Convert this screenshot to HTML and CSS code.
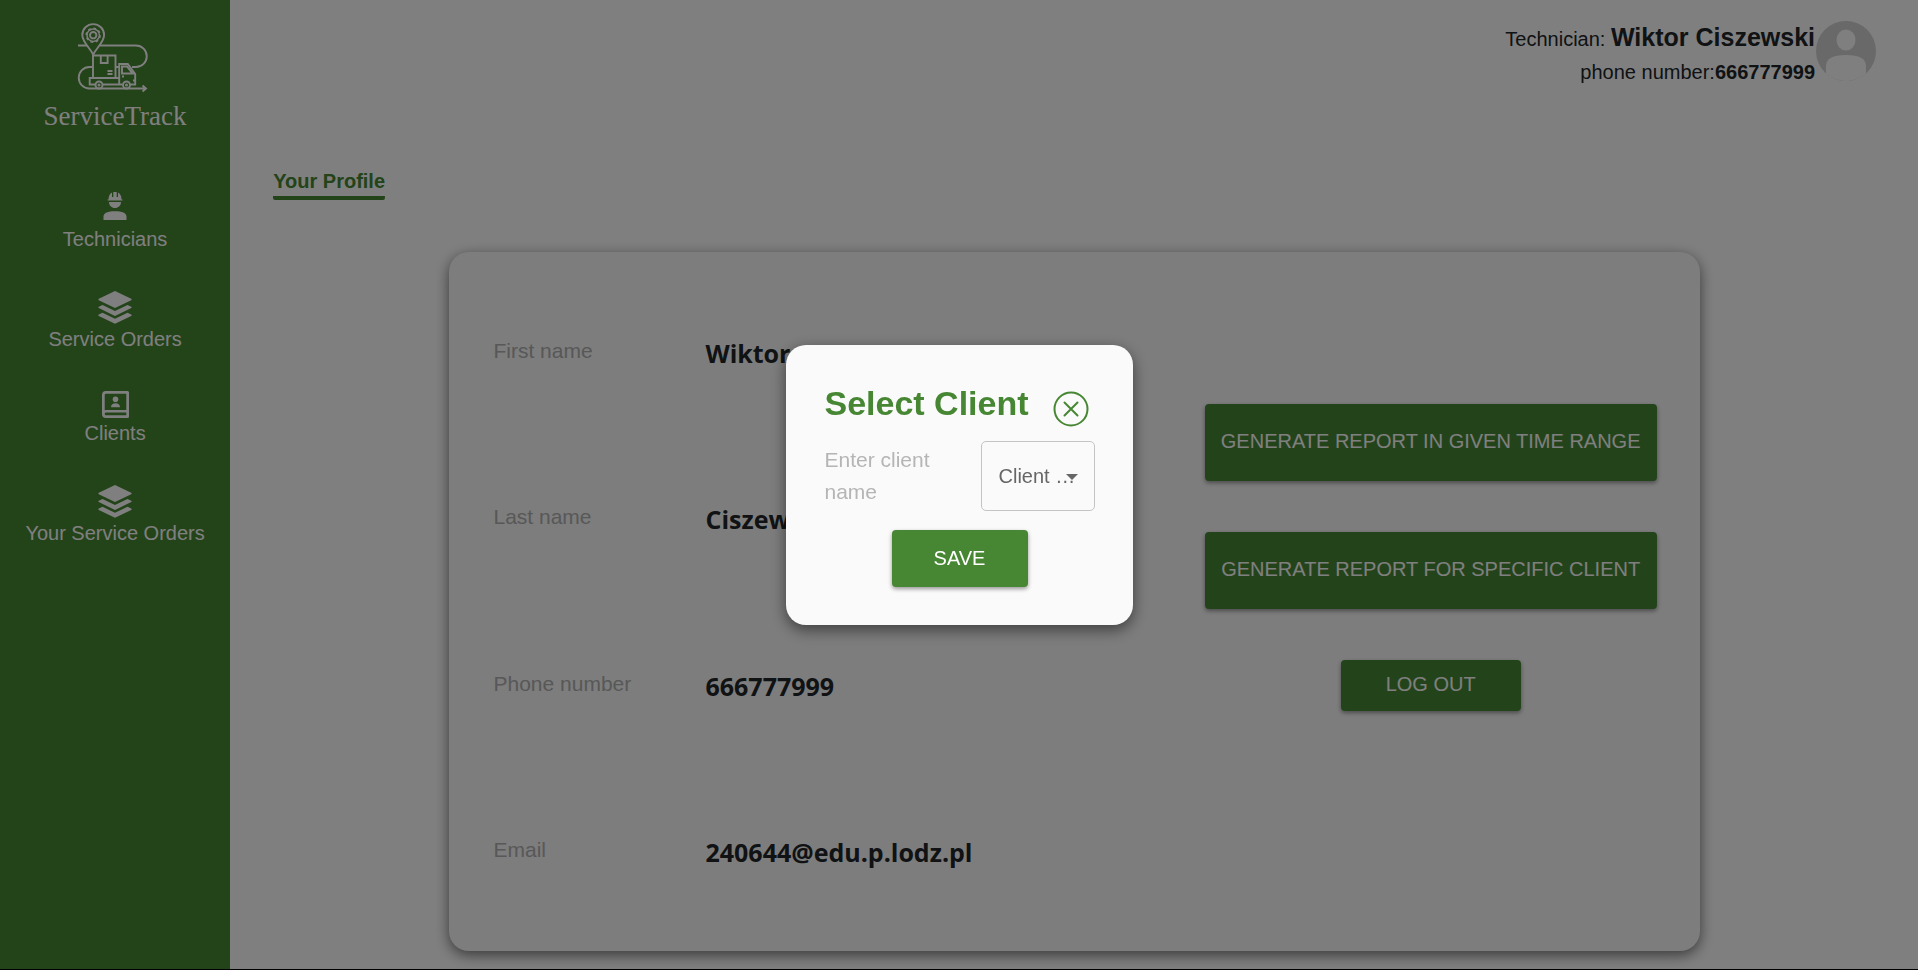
FILE: index.html
```html
<!DOCTYPE html>
<html lang="en">
<head>
<meta charset="utf-8">
<title>ServiceTrack</title>
<link rel="stylesheet" href="styles.css">
</head>
<body>
<div class="app">
  <aside class="sidebar">
    <a class="brand" href="#">
      <svg class="brand-mark" viewBox="77 22 71 71" fill="none" stroke="currentColor" stroke-width="1.9" aria-hidden="true">
        <path d="M93.2 53.5C90 47 82.3 41 82.3 34a10.9 10.9 0 0 1 21.8 0c0 7-7.700 13-10.900 19.500z"/>
        <circle cx="93.200" cy="34.200" r="6.200" stroke-width="1.500"/>
        <circle cx="93.200" cy="34.200" r="7" stroke-width="1.500" stroke-dasharray="2.750 2.750"/>
        <circle cx="93.200" cy="34.200" r="3.200"/>
        <path d="M78 44.500h9M99.500 44.500H136a10.700 10.700 0 0 1 0 21.500h-4M93 66h-3.500a10.700 10.700 0 0 0 0 21.500H146M142.500 84.500l3.500 3-3.500 3M115.500 66h4"/>
        <path d="M93 77V54.500h22.500V77M100.800 54.500V62h6.800v-7.500M107.500 70h5M107.500 73h5"/>
        <path d="M95 83.500h-5.300V77h29.500v6.500H103M119.200 77V63h8.600l7.400 10v10.500h-5M119.200 83.500h3.500M122 72.500V65.500h5l5.500 7zM122 75.500h2M133 79.500h2"/>
        <circle cx="99" cy="84" r="3.500"/><circle cx="126.500" cy="84" r="3.500"/>
        <circle cx="99" cy="84" r=".6"/><circle cx="126.500" cy="84" r=".6"/>
      </svg>
      <span class="brand-name">ServiceTrack</span>
    </a>
    <nav class="nav">
      <a class="nav-item" href="#">
        <svg width="24" height="33" viewBox="0 0 24 33" fill="currentColor" aria-hidden="true">
          <path d="M4.500 9.500v-1h1C5.500 5 7 2.600 9 1.600V6h1.300V1h3.400v5H15V1.600c2 1 3.500 3.400 3.500 6.900h1v1zM6 11h12c0 3.500-2.700 6-6 6s-6-2.500-6-6zM.5 29v-3.500C.5 22 5 20.200 12 20.200S23.500 22 23.500 25.500V29z"/>
        </svg>
        <span>Technicians</span>
      </a>
      <a class="nav-item" href="#">
        <svg width="34" height="33" viewBox="0 0 34 33" fill="currentColor" aria-hidden="true">
          <path d="M17 0 33.200 7.800a.8.8 0 0 1 0 1.400L17 17 .8 9.200a.8.8 0 0 1 0-1.400zM4.500 14 17 20l12.500-6 3.700 1.700a.8.8 0 0 1 0 1.400L17 25 .8 17.100a.8.8 0 0 1 0-1.400zM4.500 21.800l12.500 6 12.500-6 3.700 1.700a.8.8 0 0 1 0 1.400L17 32.800.8 24.900a.8.8 0 0 1 0-1.400z"/>
        </svg>
        <span>Service Orders</span>
      </a>
      <a class="nav-item" href="#">
        <svg width="27" height="27" viewBox="0 0 27 27" fill="currentColor" aria-hidden="true">
          <path fill-rule="evenodd" d="M4 0h21.500Q27 0 27 1.500v24q0 1.500-1.500 1.500H4q-4 0-4-4V4q0-4 4-4zM4 2.700Q2.700 2.700 2.700 4v15.200q.6-.2 1.300-.2h20.300V2.700zM4 21.500q-1.300 0-1.300 1.400T4 24.300h20.300v-2.800z"/>
          <circle cx="13.500" cy="8.300" r="2.800"/><path d="M9 16.200a4.500 4 0 0 1 9 0z"/>
        </svg>
        <span>Clients</span>
      </a>
      <a class="nav-item" href="#">
        <svg width="34" height="33" viewBox="0 0 34 33" fill="currentColor" aria-hidden="true">
          <path d="M17 0 33.200 7.800a.8.8 0 0 1 0 1.400L17 17 .8 9.200a.8.8 0 0 1 0-1.400zM4.500 14 17 20l12.500-6 3.700 1.700a.8.8 0 0 1 0 1.400L17 25 .8 17.100a.8.8 0 0 1 0-1.400zM4.500 21.800l12.500 6 12.500-6 3.700 1.700a.8.8 0 0 1 0 1.400L17 32.800.8 24.900a.8.8 0 0 1 0-1.400z"/>
        </svg>
        <span>Your Service Orders</span>
      </a>
    </nav>
  </aside>

  <main class="main">
    <header class="topbar">
      <div class="user">
        <div>Technician: <strong class="user-name">Wiktor Ciszewski</strong></div>
        <div>phone number:<strong>666777999</strong></div>
      </div>
      <svg class="avatar" viewBox="0 0 60 60" aria-hidden="true">
        <circle cx="30" cy="30" r="30" fill="#d2d2d2"/>
        <ellipse cx="30" cy="19" rx="9.500" ry="10.500" fill="#fff"/>
        <path d="M10 52.400V45q0-11 20-11t20 11v7.400A30 30 0 0 1 10 52.400z" fill="#fff"/>
      </svg>
    </header>

    <div class="tabs"><a class="tab" href="#">Your Profile</a></div>

    <section class="card">
      <dl class="details">
        <div class="detail"><dt>First name</dt><dd>Wiktor</dd></div>
        <div class="detail"><dt>Last name</dt><dd>Ciszewski</dd></div>
        <div class="detail"><dt>Phone number</dt><dd>666777999</dd></div>
        <div class="detail"><dt>Email</dt><dd>240644@edu.p.lodz.pl</dd></div>
      </dl>
      <div class="actions">
        <button class="btn btn-large" type="button">GENERATE REPORT IN GIVEN TIME RANGE</button>
        <button class="btn btn-large" type="button">GENERATE REPORT FOR SPECIFIC CLIENT</button>
        <button class="btn btn-logout" type="button">LOG OUT</button>
      </div>
    </section>
  </main>
</div>

<div class="overlay">
  <form class="modal" role="dialog" aria-labelledby="modal-title">
    <div class="modal-head">
      <h2 id="modal-title">Select Client</h2>
      <button class="close" type="button" aria-label="Close">
        <svg width="36" height="36" viewBox="0 0 36 36" fill="none" stroke="currentColor" stroke-width="2" stroke-linecap="round" aria-hidden="true">
          <circle cx="18" cy="18" r="16.500"/><path d="M11.500 11.500l13 13M24.500 11.500l-13 13"/>
        </svg>
      </button>
    </div>
    <div class="field">
      <label for="client">Enter client name</label>
      <div class="select">
        <select id="client"><option>Client …</option></select>
        <svg class="caret" width="12" height="6" viewBox="0 0 12 6" aria-hidden="true"><path d="M0 0h12L6 6z" fill="currentColor"/></svg>
      </div>
    </div>
    <button class="btn btn-save" type="button">SAVE</button>
  </form>
</div>
</body>
</html>
```

FILE: styles.css
```css
* { box-sizing: border-box; }

body {
  margin: 0;
  background: #fff;
  color: #212529;
  font-family: "Liberation Sans", Arial, sans-serif;
  font-size: 20px;
  line-height: 24px;
}

a { color: inherit; text-decoration: none; }

.app {
  display: flex;
  min-height: 100vh;
  border-bottom: 1px solid #000;
}

.sidebar {
  flex: 0 0 12%;
  background: #478632;
  color: #fff;
  padding-top: 23px;
}

.brand,
.nav,
.nav-item {
  display: flex;
  flex-direction: column;
  align-items: center;
}

.brand-mark { width: 71px; height: 71px; margin-right: 6px; }

.brand-name {
  margin-top: 6px;
  font-family: "Liberation Serif", "Times New Roman", serif;
  font-size: 27px;
  line-height: 32px;
}

.nav { gap: 40px; margin-top: 59px; }
.nav-item { gap: 4px; line-height: 23px; }
.nav-item svg { display: block; }

.main {
  flex: 1;
  display: flex;
  flex-direction: column;
  padding: 21px 42px 18px 43px;
}

.topbar { display: flex; justify-content: flex-end; }
.user { text-align: right; line-height: 33px; }
.user-name { font-size: 25px; }
.avatar { width: 60px; height: 60px; margin-left: 1px; }

.tabs { display: flex; margin-top: 80px; }

.tab {
  color: #478632;
  font-weight: bold;
  padding-bottom: 7px;
  background: linear-gradient(#478632, #478632) bottom / 100% 4px no-repeat;
  border-radius: 2px;
}

.card {
  flex: 1;
  display: flex;
  justify-content: space-between;
  width: 78%;
  margin: 52px auto 0;
  padding: 16px 43px 18px;
  background: #fafafa;
  border-radius: 20px;
  box-shadow: 0 4px 14px rgba(0, 0, 0, 0.55);
}

.details {
  display: grid;
  grid-auto-rows: 1fr;
  margin: 0;
}

.detail {
  display: grid;
  grid-template-columns: 212px auto;
  align-items: center;
  min-height: 80px;
  padding-left: 1px;
}

.detail dt { color: #b0b0b0; font-size: 21px; }

.detail dd {
  margin: 0;
  padding-top: 4px;
  font-family: "Open Sans", "Segoe UI", sans-serif;
  font-size: 25px;
  font-weight: bold;
}

.actions {
  display: flex;
  flex-direction: column;
  align-items: center;
  gap: 51px;
  padding-top: 136px;
}

.btn {
  border: 0;
  border-radius: 4px;
  background: #478734;
  color: #fff;
  font: 20px "Liberation Sans", Arial, sans-serif;
  white-space: nowrap;
  box-shadow: 0 2px 4px rgba(0, 0, 0, 0.4);
}

.btn-large { width: 452px; height: 77px; padding-bottom: 4px; }
.btn-logout { width: 180px; height: 51px; padding-bottom: 4px; }

.overlay {
  position: fixed;
  inset: 0;
  display: flex;
  align-items: center;
  justify-content: center;
  background: rgba(0, 0, 0, 0.5);
}

.modal {
  display: flex;
  flex-direction: column;
  width: 347px;
  padding: 38px 38px 38px 39px;
  background: #fafafa;
  border-radius: 20px;
  box-shadow: 0 5px 15px rgba(0, 0, 0, 0.5);
}

.modal-head {
  display: flex;
  justify-content: space-between;
  align-items: flex-end;
  padding-right: 6px;
}

.modal-head h2 {
  margin: 0;
  padding-bottom: 4px;
  color: #478734;
  font-size: 34px;
  line-height: 40px;
}

.close {
  display: block;
  padding: 0;
  border: 0;
  background: none;
  color: #478734;
}

.close svg { display: block; }

.field {
  display: flex;
  align-items: center;
  justify-content: space-between;
  margin-top: 14px;
}

.field label {
  width: 130px;
  color: #b5b5b5;
  font-size: 21px;
  line-height: 32px;
}

.select { position: relative; }

.select select {
  appearance: none;
  width: 114px;
  height: 70px;
  padding: 0 17px;
  border: 1px solid #c4c4c4;
  border-radius: 5px;
  background: transparent;
  color: #666;
  font: 20px "Liberation Sans", Arial, sans-serif;
}

.caret {
  position: absolute;
  top: 33px;
  right: 17px;
  color: #666;
  pointer-events: none;
}

.btn-save {
  align-self: center;
  width: 136px;
  height: 57px;
  margin-top: 19px;
}
```
